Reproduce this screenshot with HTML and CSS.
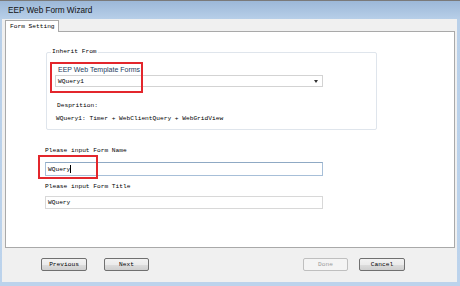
FILE: index.html
```html
<!DOCTYPE html>
<html lang="en">
<head>
    <meta charset="UTF-8">
    <title>EEP Web Form Wizard</title>
    <link rel="stylesheet" href="styles.css">
</head>
<body>
    <div class="window">
        <!-- Title bar -->
        <div class="titlebar">EEP Web Form Wizard</div>

        <div class="frame">
            <!-- Tabs -->
            <div class="tabs">
                <div class="tab active">Form Setting</div>
            </div>

            <div class="panel">
                <div class="group">
                    <span class="legend">Inherit From</span>
                    <div class="group-title">EEP Web Template Forms</div>
                    <div class="combo">
                        <span>WQuery1</span>
                        <span class="arrow"></span>
                    </div>
                    <div class="desc-label">Desprition:</div>
                    <div class="desc-text">WQuery1: Timer + WebClientQuery + WebGridView</div>
                </div>

                <div class="field-label first">Please input Form Name</div>
                <div class="textbox focused">WQuery<span class="caret"></span></div>
                <div class="field-label">Please input Form Title</div>
                <div class="textbox small">WQuery</div>

                <!-- annotation boxes -->
                <div class="mark mark-template"></div>
                <div class="mark mark-name"></div>
            </div>

            <!-- Buttons -->
            <div class="buttons">
                <button class="btn btn-prev">Previous</button>
                <button class="btn btn-next">Next</button>
                <button class="btn btn-done" disabled>Done</button>
                <button class="btn btn-cancel">Cancel</button>
            </div>
        </div>
    </div>
</body>
</html>
```

FILE: styles.css
```css
* { margin: 0; padding: 0; box-sizing: border-box; }
body { width: 460px; height: 286px; overflow: hidden; background: #b9d1ea; }

/* Window */
.window { width: 460px; height: 286px; border-top: 1px solid #7a7a7a; background: linear-gradient(#9cb8d8, #b9d0e9 19px, #bcd3ec); padding: 0 3px 4px 2px; display: flex; flex-direction: column; }
.titlebar { height: 18px; line-height: 20px; padding-left: 6px; font-family: "Liberation Sans", Arial, sans-serif; font-size: 8.2px; color: #111; }

.frame { flex: 1; background: #f0f0f0; padding: 1px 2px 0 3px; display: flex; flex-direction: column; }

/* Tabs */
.tabs { display: flex; height: 11px; position: relative; z-index: 1; }
.tab { height: 12px; width: 54px; background: #fff; border: 1px solid #a9a9a9; border-bottom: none; font-family: "Liberation Mono", monospace; font-size: 6.2px; line-height: 11px; padding-left: 4px; color: #000; }

/* Panel */
.panel { position: relative; height: 217px; background: #fff; border: 1px solid #a9a9a9; }

.group { position: relative; margin: 20px 0 0 40px; width: 331px; height: 78px; border: 1px solid #dfe5ec; border-radius: 2px; }
.legend { position: absolute; top: -5px; left: 4px; padding: 0 1px; background: #fff; font-family: "Liberation Mono", monospace; font-size: 6.2px; line-height: 8px; color: #000; }
.group-title { margin: 13px 0 0 11px; font-family: "Liberation Sans", Arial, sans-serif; font-size: 7px; line-height: 8px; color: #1e3a5e; }
.combo { margin: 1px 0 0 8px; width: 268px; height: 12px; border: 1px solid #d3d3d3; display: flex; align-items: center; justify-content: space-between; padding: 0 4px 0 2px; font-family: "Liberation Mono", monospace; font-size: 6.2px; color: #000; }
.arrow { width: 0; height: 0; border-left: 2.5px solid transparent; border-right: 2.5px solid transparent; border-top: 3px solid #333; }
.desc-label { margin: 15px 0 0 10px; font-family: "Liberation Mono", monospace; font-size: 6.2px; line-height: 8px; color: #000; }
.desc-text { margin: 5px 0 0 9px; font-family: "Liberation Mono", monospace; font-size: 6.2px; line-height: 8px; color: #000; }

/* Form fields */
.field-label { margin: 7px 0 0 39px; font-family: "Liberation Mono", monospace; font-size: 6.2px; line-height: 8px; color: #000; }
.field-label.first { margin-top: 17px; }
.textbox { margin: 7px 0 0 39px; width: 278px; height: 14px; border: 1px solid #d5dde6; display: flex; align-items: center; padding-left: 2px; font-family: "Liberation Mono", monospace; font-size: 6.2px; color: #000; }
.textbox.focused { border-color: #a7bfd8; border-top-color: #8fa9c4; }
.textbox.small { margin-top: 5px; height: 13px; border-color: #d8d8d8; }
.caret { display: inline-block; width: 1px; height: 8px; background: #000; }

/* Red annotation marks */
.mark { position: absolute; border: 2px solid #e3262c; }
.mark-template { left: 44px; top: 30px; width: 93px; height: 31px; }
.mark-name { left: 32px; top: 123px; width: 60px; height: 24px; }

/* Buttons */
.buttons { flex: 1; display: flex; align-items: center; padding-left: 36px; padding-bottom: 2px; }
.btn { width: 46px; height: 13px; border: 1px solid #707070; border-radius: 2px; background: linear-gradient(#f2f2f2, #ebebeb 50%, #dddddd 51%, #cfcfcf); font-family: "Liberation Mono", monospace; font-size: 6.2px; color: #000; }
.btn-next { margin-left: 17px; width: 45px; }
.btn-done { margin-left: 154px; width: 45px; border-color: #bfbfbf; background: #f4f4f4; color: #9a9a9a; }
.btn-cancel { margin-left: 11px; }
```
